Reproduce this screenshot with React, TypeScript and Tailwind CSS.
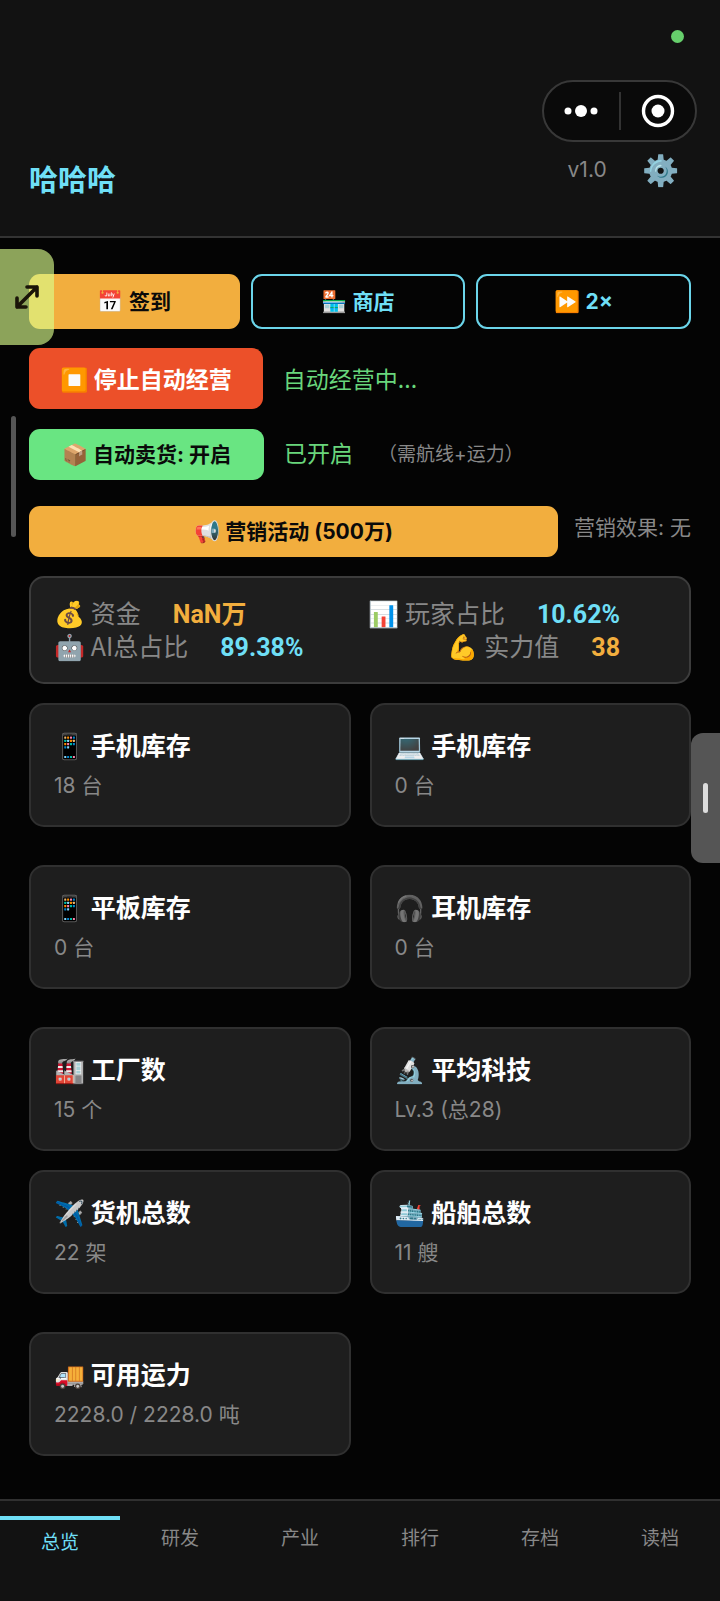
import { useState } from "react";

type Item = { icon: string; title: string; value: string };

const groups: Item[][] = [
  [
    { icon: "📱", title: "手机库存", value: "18 台" },
    { icon: "💻", title: "手机库存", value: "0 台" },
  ],
  [
    { icon: "📱", title: "平板库存", value: "0 台" },
    { icon: "🎧", title: "耳机库存", value: "0 台" },
  ],
  [
    { icon: "🏭", title: "工厂数", value: "15 个" },
    { icon: "🔬", title: "平均科技", value: "Lv.3 (总28)" },
    { icon: "✈️", title: "货机总数", value: "22 架" },
    { icon: "🛳️", title: "船舶总数", value: "11 艘" },
  ],
  [{ icon: "🚚", title: "可用运力", value: "2228.0 / 2228.0 吨" }],
];

const tabs = ["总览", "研发", "产业", "排行", "存档", "读档"];

function Stat({ icon, label, value, color }: { icon: string; label: string; value: string; color: string }) {
  return (
    <div className="flex h-[33px] items-baseline">
      <span className="text-[#888888]">{icon} {label}</span>
      <span className={`ml-8 font-['Roboto','Noto_Sans_CJK_SC',sans-serif] font-bold ${color}`}>{value}</span>
    </div>
  );
}

function Card({ icon, title, value }: Item) {
  return (
    <div className="h-[124px] rounded-[15px] border-2 border-[#303030] bg-[#1e1e1e] px-[23px] pt-[23px]">
      <h2 className="text-[25px] leading-[33px] font-bold text-white">{icon} {title}</h2>
      <p className="mt-2.5 font-['Inter','Noto_Sans_CJK_SC',sans-serif] text-[21px] leading-[30px] text-[#888888]">{value}</p>
    </div>
  );
}

export default function App() {
  const [tab, setTab] = useState(0);

  return (
    <div className="relative flex min-h-screen flex-col overflow-hidden bg-[#040404] font-['Noto_Sans_CJK_SC','Noto_Color_Emoji',sans-serif]">
      {/* Header */}
      <header className="border-b-2 border-[#333333] bg-[#121212]">
        <div className="flex h-20 items-start justify-end pr-9 pt-[30px]">
          <span className="size-[13px] rounded-full bg-[#66cf6c]" />
        </div>

        <div className="flex justify-end pr-[23px]">
          <div className="flex h-[62px] w-[155px] items-center rounded-full border-2 border-[#383838] bg-[#0a0a0a]">
            <button aria-label="更多" className="flex flex-1 justify-center">
              <svg width="34" height="14" viewBox="0 0 34 14" fill="white">
                <circle cx="4" cy="7" r="3.5" />
                <circle cx="17" cy="7" r="6" />
                <circle cx="30" cy="7" r="3.5" />
              </svg>
            </button>
            <span className="h-[38px] w-0.5 bg-[#333333]" />
            <button aria-label="关闭" className="flex flex-1 justify-center">
              <svg width="34" height="34" viewBox="0 0 34 34">
                <circle cx="17" cy="17" r="14.5" fill="none" stroke="white" strokeWidth="3.4" />
                <circle cx="17" cy="17" r="6.5" fill="white" />
              </svg>
            </button>
          </div>
        </div>

        <div className="flex h-[94px] items-start justify-between pl-[29px] pr-10 pt-[3px]">
          <h1 className="pt-3 text-[29px] leading-[42px] font-bold text-[#6fdff6]">哈哈哈</h1>
          <div className="flex items-center gap-9">
            <span className="pt-1 font-['Inter',sans-serif] text-[21px] leading-[42px] text-[#888888]">v1.0</span>
            <button aria-label="设置" className="text-[30px] leading-[42px]">⚙️</button>
          </div>
        </div>
      </header>

      <main className="flex-1 px-[29px] pb-[42px] pt-9">
        {/* Actions */}
        <div className="flex gap-[11px] font-['Inter','Noto_Sans_CJK_SC','Noto_Color_Emoji',sans-serif] text-[21px] font-bold">
          <button className="h-[55px] flex-1 rounded-[11px] bg-[#f2ae3e] text-[#0a0a0a]">📅 签到</button>
          <button className="h-[55px] flex-1 rounded-[11px] border-2 border-[#6bd5ea] text-[#6fdff6]">🏪 商店</button>
          <button className="h-[55px] flex-1 rounded-[11px] border-2 border-[#6bd5ea] text-[#6fdff6]">⏩ 2×</button>
        </div>

        <div className="mt-[19px] flex items-center gap-5">
          <button className="h-[61px] rounded-[11px] bg-[#ec5029] px-[31px] text-[23px] font-bold text-white">⏹️ 停止自动经营</button>
          <span className="text-[23px] text-[#69d67c]">自动经营中...</span>
        </div>

        <div className="mt-5 flex items-center font-['Inter','Noto_Sans_CJK_SC','Noto_Color_Emoji',sans-serif]">
          <button className="h-[51px] rounded-[11px] bg-[#69e582] px-[33px] text-[21px] font-bold text-[#0a0a0a]">📦 自动卖货: 开启</button>
          <span className="ml-5 text-[23px] text-[#69d67c]">已开启</span>
          <span className="ml-[25px] text-[19px] leading-[34px] text-[#888888]">（需航线+运力）</span>
        </div>

        <div className="mt-[26px] flex items-start gap-4 font-['Inter','Noto_Sans_CJK_SC','Noto_Color_Emoji',sans-serif]">
          <button className="h-[51px] flex-1 rounded-[11px] bg-[#f2ae3e] text-[21px] font-bold text-[#0a0a0a]">📢 营销活动 (500万)</button>
          <span className="text-[21px] leading-[44px] text-[#888888]">营销效果: 无</span>
        </div>

        {/* Summary */}
        <section className="mt-[19px] rounded-[15px] border-2 border-[#3c3c3c] bg-[#1e1e1e] pb-5 pl-[23px] pr-[69px] pt-[18px] text-[25px] leading-[33px]">
          <div className="flex justify-between">
            <Stat icon="💰" label="资金" value="NaN万" color="text-[#f2ae3e]" />
            <Stat icon="📊" label="玩家占比" value="10.62%" color="text-[#6fdff6]" />
          </div>
          <div className="flex justify-between">
            <Stat icon="🤖" label="AI总占比" value="89.38%" color="text-[#6fdff6]" />
            <Stat icon="💪" label="实力值" value="38" color="text-[#f2ae3e]" />
          </div>
        </section>

        {/* Cards */}
        <div className="mt-[19px] flex flex-col gap-[38px]">
          {groups.map((items, i) => (
            <div key={i} className="grid grid-cols-2 gap-[19px]">
              {items.map((item) => (
                <Card key={item.icon + item.title} {...item} />
              ))}
            </div>
          ))}
        </div>
      </main>

      {/* Tab bar */}
      <nav className="flex h-[102px] border-t-2 border-[#303030] bg-[#121212] pt-[15px]">
        {tabs.map((name, i) => (
          <button
            key={name}
            onClick={() => setTab(i)}
            className={`flex flex-1 items-start justify-center text-[19px] leading-[42px] ${
              i === tab ? "border-t-4 border-[#6fdff6] text-[#6fdff6]" : "text-[#888888]"
            }`}
          >
            {name}
          </button>
        ))}
      </nav>

      {/* Floating expand handle */}
      <button aria-label="展开" className="absolute left-0 top-[249px] flex h-24 w-[54px] items-center justify-center rounded-r-2xl bg-[#d9fd8c]/64">
        <svg width="26" height="26" viewBox="0 0 26 26" fill="none" stroke="#1a1408" strokeWidth="3.6" strokeLinecap="round" strokeLinejoin="round">
          <path d="M3 23 23 3M13 3H23V12M3 14V23H12" />
        </svg>
      </button>

      <div className="absolute left-[11px] top-[416px] h-[121px] w-[5px] rounded-full bg-[#555555]" />

      <div className="absolute right-0 top-[733px] flex h-[130px] w-[29px] items-center justify-center rounded-l-xl bg-[#555555]">
        <span className="h-[30px] w-[5px] rounded-full bg-[#dddddd]" />
      </div>
    </div>
  );
}
